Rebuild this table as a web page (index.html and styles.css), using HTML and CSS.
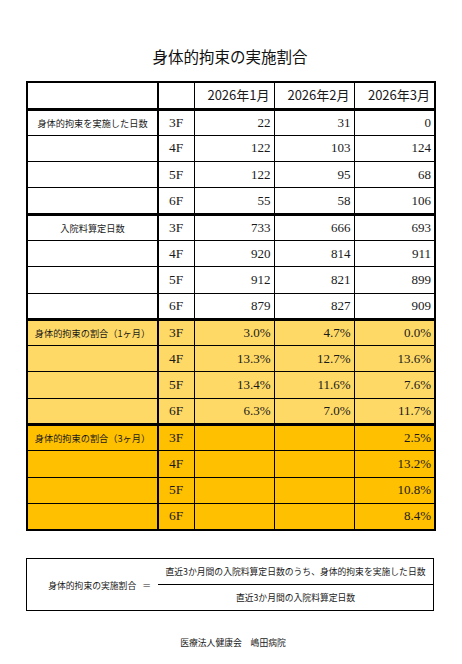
FILE: index.html
```html
<!DOCTYPE html>
<html lang="ja">
<head>
  <meta charset="UTF-8">
  <meta name="viewport" content="width=device-width, initial-scale=1.0">
  <title>身体的拘束の実施割合</title>
  <link rel="stylesheet" href="styles.css">
</head>
<body>
  <div class="page">
    <h1 class="title">身体的拘束の実施割合</h1>

    <table class="stats">
      <colgroup>
        <col class="col-label">
        <col class="col-floor">
        <col class="col-month">
        <col class="col-month">
        <col class="col-month-last">
      </colgroup>
      <thead>
        <tr>
          <th class="label"></th>
          <th class="floor"></th>
          <th class="month">2026年1月</th>
          <th class="month">2026年2月</th>
          <th class="month">2026年3月</th>
        </tr>
      </thead>
      <!-- 実施日数 -->
      <tbody>
        <tr><td class="label">身体的拘束を実施した日数</td><td class="floor">3F</td><td>22</td><td>31</td><td>0</td></tr>
        <tr><td class="label"></td><td class="floor">4F</td><td>122</td><td>103</td><td>124</td></tr>
        <tr><td class="label"></td><td class="floor">5F</td><td>122</td><td>95</td><td>68</td></tr>
        <tr><td class="label"></td><td class="floor">6F</td><td>55</td><td>58</td><td>106</td></tr>
      </tbody>
      <!-- 入院料算定日数 -->
      <tbody>
        <tr><td class="label">入院料算定日数</td><td class="floor">3F</td><td>733</td><td>666</td><td>693</td></tr>
        <tr><td class="label"></td><td class="floor">4F</td><td>920</td><td>814</td><td>911</td></tr>
        <tr><td class="label"></td><td class="floor">5F</td><td>912</td><td>821</td><td>899</td></tr>
        <tr><td class="label"></td><td class="floor">6F</td><td>879</td><td>827</td><td>909</td></tr>
      </tbody>
      <!-- 割合（1ヶ月） -->
      <tbody class="rate-month">
        <tr><td class="label">身体的拘束の割合（1ヶ月）</td><td class="floor">3F</td><td>3.0%</td><td>4.7%</td><td>0.0%</td></tr>
        <tr><td class="label"></td><td class="floor">4F</td><td>13.3%</td><td>12.7%</td><td>13.6%</td></tr>
        <tr><td class="label"></td><td class="floor">5F</td><td>13.4%</td><td>11.6%</td><td>7.6%</td></tr>
        <tr><td class="label"></td><td class="floor">6F</td><td>6.3%</td><td>7.0%</td><td>11.7%</td></tr>
      </tbody>
      <!-- 割合（3ヶ月） -->
      <tbody class="rate-quarter">
        <tr><td class="label">身体的拘束の割合（3ヶ月）</td><td class="floor">3F</td><td></td><td></td><td>2.5%</td></tr>
        <tr><td class="label"></td><td class="floor">4F</td><td></td><td></td><td>13.2%</td></tr>
        <tr><td class="label"></td><td class="floor">5F</td><td></td><td></td><td>10.8%</td></tr>
        <tr><td class="label"></td><td class="floor">6F</td><td></td><td></td><td>8.4%</td></tr>
      </tbody>
    </table>

    <div class="formula">
      <div class="formula-name">身体的拘束の実施割合<span class="eq">＝</span></div>
      <div class="fraction">
        <div class="numer">直近3か月間の入院料算定日数のうち、身体的拘束を実施した日数</div>
        <div class="denom">直近3か月間の入院料算定日数</div>
      </div>
    </div>

    <p class="footer">医療法人健康会　嶋田病院</p>
  </div>
</body>
</html>
```

FILE: styles.css
```css
body {
  margin: 0;
  padding: 0;
  background: #fff;
  color: #1a1a1a;
  font-family: "Noto Sans CJK JP", "Noto Sans", sans-serif;
}
.page {
  width: 462px;
  padding: 46px 0 0 26px;
  box-sizing: border-box;
}
.title {
  width: 408px;
  margin: 0 0 15px;
  font-size: 15.5px;
  font-weight: normal;
  line-height: 20px;
  text-align: center;
  color: #111;
}
.stats {
  width: 408px;
  border-collapse: collapse;
  table-layout: fixed;
  border: 2px solid #000;
}
.col-label { width: 131px; }
.col-floor { width: 36px; }
.col-month { width: 80px; }
.col-month-last { width: 81px; }
.stats tr {
  height: 26.3px;
}
.stats thead tr {
  height: 27px;
}
.stats th,
.stats td {
  border: 1px solid #000;
  padding: 0 3px 0 0;
  line-height: 14px;
  text-align: right;
  vertical-align: middle;
  font-family: "Liberation Serif", "DejaVu Serif", serif;
  font-size: 13px;
  font-weight: normal;
  white-space: nowrap;
}
.stats thead th {
  border-bottom: 3px solid #000;
}
.stats th.month {
  font-family: "Noto Sans CJK JP", "Noto Sans", sans-serif;
  padding-right: 4px;
}
.stats tbody {
  border-top: 3px solid #000;
}
.stats .label {
  border-right: 2px solid #000;
  padding: 0;
  text-align: center;
  font-family: "Noto Sans CJK JP", "Noto Sans", sans-serif;
  font-size: 9.2px;
}
.stats .floor {
  padding: 0;
  text-align: center;
  font-size: 13.5px;
}
.rate-month td {
  background: #ffd966;
}
.rate-quarter td {
  background: #ffc000;
}
.formula {
  display: flex;
  width: 408px;
  height: 53px;
  margin-top: 27px;
  border: 1px solid #000;
  box-sizing: border-box;
  font-size: 8.8px;
}
.formula-name {
  width: 131px;
  display: flex;
  align-items: center;
  justify-content: flex-end;
  padding: 2px 7px 0 0;
  box-sizing: border-box;
}
.eq {
  margin-left: 6px;
}
.fraction {
  flex: 1;
  display: flex;
  flex-direction: column;
}
.numer,
.denom {
  flex: 1;
  display: flex;
  align-items: center;
  justify-content: center;
}
.numer {
  border-bottom: 1px solid #000;
}
.footer {
  width: 408px;
  margin: 25px 0 0;
  padding-left: 6px;
  box-sizing: border-box;
  font-size: 8.8px;
  text-align: center;
}
```
